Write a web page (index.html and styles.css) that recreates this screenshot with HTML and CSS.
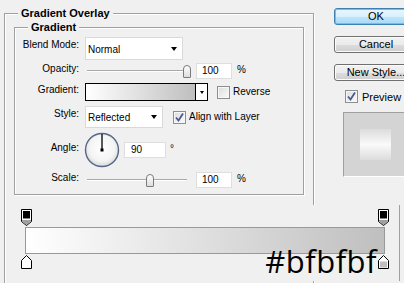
FILE: index.html
```html
<!DOCTYPE html>
<html lang="en">

<head>
    <meta charset="UTF-8">
    <meta name="viewport" content="width=device-width, initial-scale=1.0">
    <title>Layer Style - Gradient Overlay</title>
    <link rel="stylesheet" href="styles.css">
</head>

<body>
    <div class="dialog">
        <div class="main">
            <fieldset class="group outer">
                <legend>Gradient Overlay</legend>
                <fieldset class="group inner">
                    <legend>Gradient</legend>

                    <div class="row row-blend">
                        <span class="label">Blend Mode:</span>
                        <div class="select select-blend"><span>Normal</span><i class="arrow"></i></div>
                    </div>

                    <div class="row row-opacity">
                        <span class="label">Opacity:</span>
                        <div class="slider">
                            <div class="track"></div>
                            <div class="thumb" style="left: 98px;"></div>
                        </div>
                        <div class="field">100</div>
                        <span class="unit">%</span>
                    </div>

                    <div class="row row-gradient">
                        <span class="label">Gradient:</span>
                        <div class="picker">
                            <div class="swatch"></div>
                            <div class="drop"><i class="arrow small"></i></div>
                        </div>
                        <div class="check-wrap check-reverse">
                            <span class="check"></span>
                            <span>Reverse</span>
                        </div>
                    </div>

                    <div class="row row-style">
                        <span class="label">Style:</span>
                        <div class="select select-style"><span>Reflected</span><i class="arrow"></i></div>
                        <div class="check-wrap check-align">
                            <span class="check checked">
                                <svg width="11" height="11" viewBox="0 0 11 11"><path d="M2 5.5L4.5 8.5L9 1.5" fill="none" stroke="#4a5a8f" stroke-width="1.8"/></svg>
                            </span>
                            <span>Align with Layer</span>
                        </div>
                    </div>

                    <div class="row row-angle">
                        <span class="label">Angle:</span>
                        <svg class="dial" width="36" height="36" viewBox="0 0 36 36">
                            <defs>
                                <radialGradient id="dialFill" cx="50%" cy="45%" r="55%">
                                    <stop offset="0%" stop-color="#ffffff"/>
                                    <stop offset="70%" stop-color="#f4f4f4"/>
                                    <stop offset="100%" stop-color="#d8d8d8"/>
                                </radialGradient>
                            </defs>
                            <circle cx="18" cy="18" r="16.5" fill="url(#dialFill)" stroke="#56658c" stroke-width="1.4"/>
                            <line x1="18" y1="18" x2="18" y2="2" stroke="#000" stroke-width="1.3"/>
                            <rect x="16.5" y="16.5" width="3" height="3" fill="#000"/>
                        </svg>
                        <div class="field field-angle">90</div>
                        <span class="unit degree">°</span>
                    </div>

                    <div class="row row-scale">
                        <span class="label">Scale:</span>
                        <div class="slider">
                            <div class="track"></div>
                            <div class="thumb" style="left: 61px;"></div>
                        </div>
                        <div class="field">100</div>
                        <span class="unit">%</span>
                    </div>
                </fieldset>
            </fieldset>
        </div>

        <div class="side">
            <button class="btn btn-ok">OK</button>
            <button class="btn">Cancel</button>
            <button class="btn">New Style...</button>
            <div class="check-wrap check-preview">
                <span class="check checked">
                    <svg width="11" height="11" viewBox="0 0 11 11"><path d="M2 5.5L4.5 8.5L9 1.5" fill="none" stroke="#4a5a8f" stroke-width="1.8"/></svg>
                </span>
                <span>Preview</span>
            </div>
            <div class="preview">
                <div class="preview-tile"></div>
            </div>
        </div>

        <!-- gradient editor strip, laid over the lower part of the dialog -->
        <div class="editor">
            <div class="stops stops-top">
                <svg width="11" height="17" viewBox="0 0 11 17">
                    <path d="M0.5 0.5H10.5V12.5L5.5 16.5L0.5 12.5Z" fill="#fff" stroke="#000"/>
                    <path d="M1 11H10V12.3L5.5 15.9L1 12.3Z" fill="#a0a0a0"/>
                    <rect x="1.5" y="1.5" width="8" height="8.5" fill="#000" stroke="#fff"/>
                </svg>
                <svg width="11" height="17" viewBox="0 0 11 17">
                    <path d="M0.5 0.5H10.5V12.5L5.5 16.5L0.5 12.5Z" fill="#fff" stroke="#000"/>
                    <path d="M1 11H10V12.3L5.5 15.9L1 12.3Z" fill="#a0a0a0"/>
                    <rect x="1.5" y="1.5" width="8" height="8.5" fill="#000" stroke="#fff"/>
                </svg>
            </div>
            <div class="ramp"></div>
            <div class="stops stops-bottom">
                <svg width="11" height="14" viewBox="0 0 11 14">
                    <path d="M5.5 0.5L10.5 5.5V13.5H0.5V5.5Z" fill="#fff" stroke="#000"/>
                </svg>
                <span class="hex">#bfbfbf</span>
                <svg width="11" height="14" viewBox="0 0 11 14">
                    <path d="M5.5 0.5L10.5 5.5V13.5H0.5V5.5Z" fill="#fff" stroke="#000"/>
                    <rect x="2" y="6.5" width="7" height="6" fill="#bfbfbf"/>
                </svg>
            </div>
        </div>
    </div>
</body>

</html>
```

FILE: styles.css
```css
body {
    margin: 0;
    width: 404px;
    height: 283px;
    overflow: hidden;
    background: #f0f0f0;
    font-family: "Liberation Sans", Arial, sans-serif;
    font-size: 10px;
    line-height: 12px;
    color: #000;
}

.dialog {
    position: relative;
    display: flex;
    align-items: flex-start;
    height: 283px;
    overflow: hidden;
}

.main {
    margin: 7px 0 0 4px;
    width: 310px;
    flex: none;
}

/* etched group boxes */
.group {
    box-sizing: border-box;
    margin: 0;
    min-width: 0;
    border: 1px solid #a0a0a0;
    box-shadow: inset 1px 1px 0 #fff, 1px 1px 0 #fff;
}

.group legend {
    padding: 0 3px;
    font-size: 11px;
    line-height: 13px;
    font-weight: bold;
    background: #f0f0f0;
}

.outer {
    width: 310px;
    height: 277px;
    padding: 1px 9px 0 9px;
}

.outer > legend {
    margin-left: 4px;
}

.inner {
    width: 290px;
    padding: 3px 0 6px 0;
}

.inner > legend {
    margin-left: 13px;
}

.row {
    display: flex;
    align-items: center;
}

.label {
    width: 64px;
    margin-right: 6px;
    text-align: right;
    align-self: flex-start;
    flex: none;
}

.row-blend {
    height: 23px;
}

.row-blend .label {
    padding-top: 2px;
}

.row-opacity {
    height: 16px;
    margin-top: 3px;
}

.row-gradient {
    height: 18px;
    margin-top: 4px;
}

.row-gradient .label {
    padding-top: 1px;
}

.row-style {
    height: 22px;
    margin-top: 5px;
}

.row-style .label {
    padding-top: 2px;
}

.row-angle {
    height: 36px;
    margin-top: 4px;
}

.row-angle .label {
    padding-top: 10px;
}

.row-scale {
    height: 16px;
    margin-top: 4px;
}

/* dropdowns */
.select {
    box-sizing: border-box;
    height: 100%;
    display: flex;
    align-items: center;
    justify-content: space-between;
    padding: 2px 5px 0 2px;
    background: #fff;
    border: 1px solid #d9d9d9;
}

.select-blend {
    width: 98px;
}

.select-style {
    width: 78px;
}

.arrow {
    width: 0;
    height: 0;
    border-style: solid;
    border-width: 4px 3.5px 0 3.5px;
    border-color: #000 transparent transparent transparent;
    margin-top: -2px;
}

.arrow.small {
    border-width: 3px 2.5px 0 2.5px;
    margin-top: 0;
}

/* sliders */
.slider {
    position: relative;
    width: 106px;
    height: 16px;
    margin-right: 5px;
    display: flex;
    align-items: center;
}

.track {
    margin-left: 2px;
    width: 100px;
    height: 0;
    border-top: 1px solid #a9a9a9;
    border-bottom: 1px solid #fff;
}

.thumb {
    position: absolute;
    top: 2px;
    box-sizing: border-box;
    width: 8px;
    height: 13px;
    border: 1px solid #7a7a7a;
    border-radius: 4px 4px 1px 1px;
    background: linear-gradient(#fdfdfd, #dedede);
}

.field {
    box-sizing: border-box;
    width: 36px;
    height: 16px;
    padding-left: 5px;
    background: #fff;
    border: 1px solid #dedede;
    display: flex;
    align-items: center;
}

.field-angle {
    width: 42px;
    margin-left: 4px;
    padding-left: 6px;
}

.unit {
    margin-left: 5px;
    align-self: flex-start;
    padding-top: 1px;
}

.degree {
    margin-left: 4px;
    padding-top: 11px;
}

.dial {
    margin-left: -1px;
    flex: none;
}

/* gradient picker */
.picker {
    box-sizing: border-box;
    width: 123px;
    height: 18px;
    border: 1px solid #000;
    display: flex;
}

.swatch {
    flex: 1;
    background: linear-gradient(to right, #fff, #bfbfbf);
}

.drop {
    box-sizing: border-box;
    width: 12px;
    border-left: 1px solid #000;
    background: #fff;
    display: flex;
    align-items: center;
    justify-content: center;
}

/* checkboxes */
.check-wrap {
    display: flex;
    align-items: center;
    gap: 3px;
}

.check-reverse {
    margin-left: 9px;
}

.check-align {
    margin-left: 10px;
}

.check {
    box-sizing: border-box;
    width: 13px;
    height: 13px;
    border: 1px solid #8e8f8f;
    background: linear-gradient(135deg, #dcdcdc, #fbfbfb);
    box-shadow: inset 0 0 0 1px #f6f6f6;
    display: flex;
    align-items: center;
    justify-content: center;
}

/* right column */
.side {
    margin: 8px 0 0 20px;
    display: flex;
    flex-direction: column;
    align-items: flex-start;
    flex: none;
}

.btn {
    box-sizing: border-box;
    width: 84px;
    height: 17px;
    margin: 0 0 11px 0;
    padding: 0;
    font-family: "Liberation Sans", Arial, sans-serif;
    font-size: 11px;
    line-height: 13px;
    color: #000;
    border: 1px solid #707070;
    border-radius: 3px;
    background: linear-gradient(#f2f2f2 0%, #ebebeb 50%, #dddddd 51%, #cfcfcf 100%);
    box-shadow: inset 0 0 0 1px #fcfcfc;
}

.btn-ok {
    border-color: #3c7fb1;
    background: linear-gradient(#eaf6fd 0%, #d9f0fc 50%, #bee6fd 51%, #a7d9f5 100%);
    box-shadow: inset 0 0 0 1px #48d0ff;
}

.check-preview {
    margin: -2px 0 0 11px;
    gap: 4px;
    font-size: 11px;
}

.preview {
    box-sizing: border-box;
    width: 78px;
    height: 65px;
    margin: 9px 0 0 9px;
    padding: 16px 0 0 16px;
    background: #d4d4d4;
    border-top: 1px solid #a0a0a0;
    border-left: 1px solid #a0a0a0;
    border-bottom: 1px solid #fff;
}

.preview-tile {
    width: 31px;
    height: 31px;
    background: linear-gradient(#dcdcdc, #fafafa 50%, #dcdcdc);
}

/* gradient editor */
.editor {
    position: absolute;
    left: 8px;
    top: 205px;
    box-sizing: border-box;
    width: 392px;
    height: 76px;
    background: #f0f0f0;
    border-right: 1px solid #a0a0a0;
}

.stops {
    display: flex;
    justify-content: space-between;
    align-items: flex-start;
    padding: 0 10px 0 13px;
}

.stops svg {
    display: block;
    flex: none;
}

.stops-top {
    padding-top: 4px;
}

.ramp {
    box-sizing: border-box;
    width: 360px;
    height: 27px;
    margin: 1px 0 0 17px;
    border: 1px solid #999;
    background: linear-gradient(to right, #fff, #bfbfbf);
}

.stops-bottom {
    margin-top: 1px;
}

.hex {
    flex: 1;
    text-align: right;
    margin: -9px 1px 0 0;
    font-family: "Open Sans", sans-serif;
    font-size: 31px;
    line-height: 30px;
    letter-spacing: 0.5px;
}
```
